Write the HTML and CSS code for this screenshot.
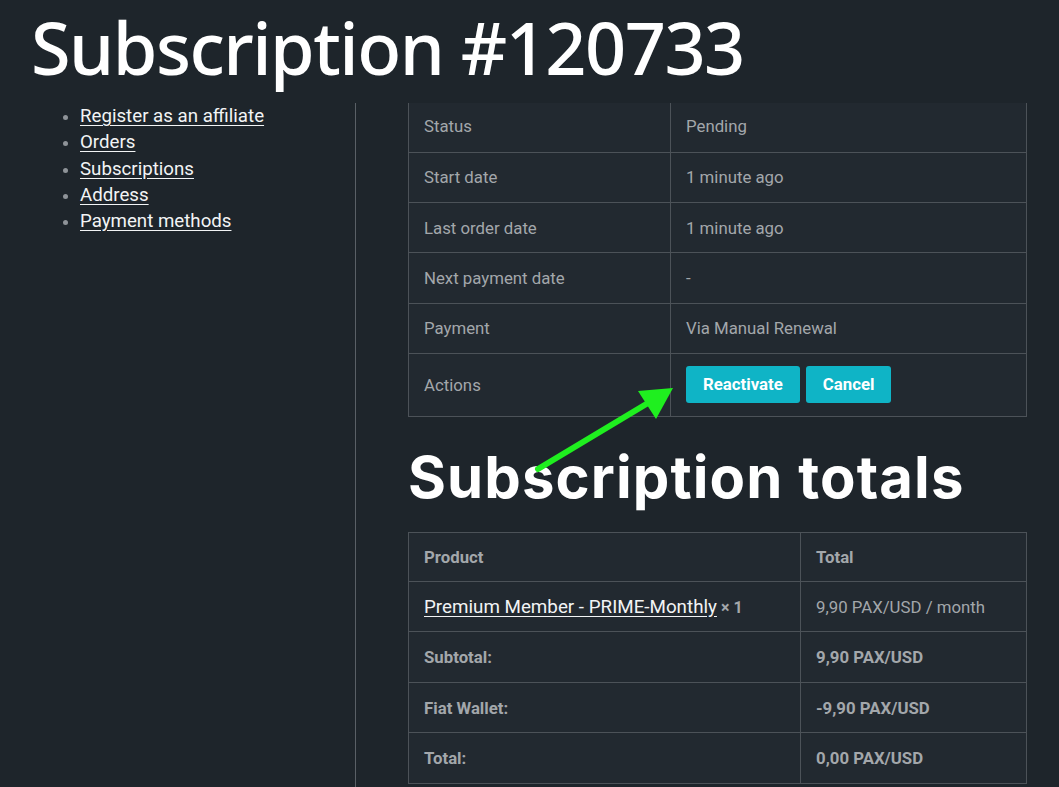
FILE: index.html
```html
<!DOCTYPE html>
<html>
<head>
<meta charset="utf-8">
<link rel="stylesheet" href="styles.css">
</head>
<body>
<h1 class="page-title">Subscription #120733</h1>
<div class="layout">
  <nav class="sidebar">
    <ul class="nav-list">
      <li><a href="#">Register as an affiliate</a></li>
      <li><a href="#">Orders</a></li>
      <li><a href="#">Subscriptions</a></li>
      <li><a href="#">Address</a></li>
      <li><a href="#">Payment methods</a></li>
    </ul>
  </nav>
  <main class="content">
    <table class="details">
      <tr class="first"><td class="label">Status</td><td>Pending</td></tr>
      <tr><td class="label">Start date</td><td>1 minute ago</td></tr>
      <tr><td class="label">Last order date</td><td>1 minute ago</td></tr>
      <tr><td class="label">Next payment date</td><td>-</td></tr>
      <tr><td class="label">Payment</td><td>Via Manual Renewal</td></tr>
      <tr class="actions-row"><td class="label">Actions</td><td><div class="btns"><a class="btn" href="#">Reactivate</a><a class="btn" href="#">Cancel</a></div></td></tr>
    </table>
    <h2 class="totals-title">Subscription totals</h2>
    <table class="totals">
      <tr class="head"><th>Product</th><th>Total</th></tr>
      <tr><td><a href="#">Premium Member - PRIME-Monthly</a> <strong class="qty">× 1</strong></td><td>9,90 PAX/USD / month</td></tr>
      <tr class="bold"><th>Subtotal:</th><th>9,90 PAX/USD</th></tr>
      <tr class="bold"><th>Fiat Wallet:</th><th>-9,90 PAX/USD</th></tr>
      <tr class="bold"><th>Total:</th><th>0,00 PAX/USD</th></tr>
    </table>
  </main>
</div>
<svg class="arrow" width="1059" height="787" viewBox="0 0 1059 787">
  <line x1="538" y1="469" x2="648" y2="403" stroke="#1fef1f" stroke-width="6" stroke-linecap="round"/>
  <polygon points="673,388 638,391 656,419" fill="#1fef1f"/>
</svg>
</body>
</html>
```
FILE: styles.css
```css
html, body {
  margin: 0;
  padding: 0;
  background: #1e252b;
  height: 100%;
  overflow: hidden;
}
body {
  position: relative;
  font-family: Roboto, "Liberation Sans", sans-serif;
  color: #a3a7ab;
}
.page-title {
  margin: 0;
  padding: 6px 0 0 31px;
  height: 97px;
  box-sizing: border-box;
  font-family: "Noto Sans", sans-serif;
  font-weight: 500;
  font-size: 72px;
  line-height: 82px;
  color: #ffffff;
  letter-spacing: -1.5px;
  white-space: nowrap;
}
.layout {
  display: flex;
  height: 690px;
}
.sidebar {
  width: 355px;
  border-right: 1px solid #5a6066;
  margin-top: 6px;
}
.nav-list {
  margin: 0;
  padding: 0 0 0 80px;
  list-style: disc;
  color: #8e9398;
  font-size: 18.7px;
  line-height: 26.3px;
}
.nav-list li::marker {
  font-size: 17px;
}
.nav-list a {
  color: #f2f4f5;
  text-decoration: underline;
  text-underline-offset: 3px;
}
.content {
  padding-left: 52px;
  width: 619px;
  padding-top: 6px;
}
table {
  border-collapse: collapse;
  width: 619px;
  font-size: 16.8px;
}
td, th {
  border: 1.5px solid #4c5258;
  padding: 0 15px;
  text-align: left;
  background: #222930;
}
.details tr { height: 50.3px; }
.details tr.first { height: 49.3px; }
.details tr.first td { border-top: none; padding-bottom: 3px; }
.details td:first-child { width: 231px; }
.details .actions-row { height: 63px; }
.btns { display: flex; gap: 6px; }
.btn {
  display: inline-block;
  background: #0fb4c6;
  color: #ffffff;
  font-weight: 700;
  text-decoration: none;
  padding: 0 17px;
  line-height: 37px;
  border-radius: 3px;
  font-size: 16.8px;
}
.totals-title {
  margin: 0;
  padding: 25px 0 0 0;
  height: 115px;
  box-sizing: border-box;
  font-family: Inter, sans-serif;
  font-weight: 700;
  font-size: 58px;
  line-height: 70px;
  color: #ffffff;
  letter-spacing: 1.1px;
}
.totals tr { height: 50.5px; }
.totals tr.head { height: 49px; }
.totals td:first-child, .totals th:first-child { width: 361px; }
.totals th { font-weight: 700; color: #a3a7ab; }
.totals a {
  color: #f2f4f5;
  font-size: 18.8px;
  text-underline-offset: 3px;
}
.qty { color: #a3a7ab; font-weight: 700; font-size: 16px; }
.arrow {
  position: absolute;
  left: 0;
  top: 0;
  pointer-events: none;
}
```
